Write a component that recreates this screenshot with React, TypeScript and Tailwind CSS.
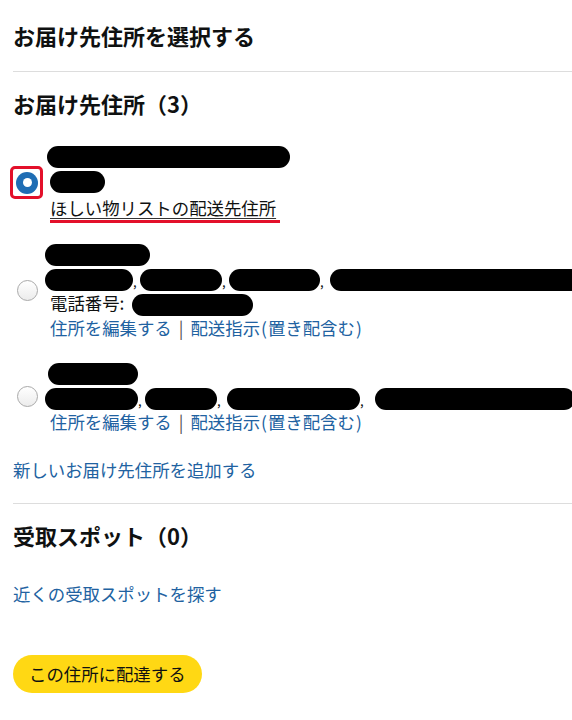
import React from 'react';

const font = { fontFamily: '"Noto Sans CJK JP", "Noto Sans", sans-serif' };

function Bar({ w, ml = 0 }: { w: number; ml?: number }) {
  return (
    <span
      className="inline-block h-[22px] rounded-full bg-black align-middle"
      style={{ width: w, marginLeft: ml }}
    />
  );
}

function Comma() {
  return <span className="inline-block w-[7px] align-bottom text-[13px] leading-[18px] text-[#111]">,</span>;
}

function Radio({ checked }: { checked?: boolean }) {
  if (checked) {
    return (
      <div className="relative ml-[3px] h-[22px] w-[22px]">
        <div className="absolute -left-[6px] -top-[6px] h-[33px] w-[33px] rounded-[5px] border-[3px] border-[#e3102a]" />
        <div className="flex h-[22px] w-[22px] items-center justify-center rounded-full bg-[#1f6db4]">
          <div className="h-[9px] w-[9px] rounded-full bg-white" />
        </div>
      </div>
    );
  }
  return (
    <div className="ml-[4px] h-[21px] w-[21px] rounded-full border border-[#a9a9a9] bg-gradient-to-b from-white to-[#ececec]" />
  );
}

function Links() {
  return (
    <div className="h-[25px] leading-[25px] text-[#2162a1]">
      住所を編集する<span className="mx-[7px] text-[#555]">|</span>配送指示<span className="mx-[1px]">(</span>置き配含む<span className="ml-[1px]">)</span>
    </div>
  );
}

export default function App() {
  return (
    <div className="min-h-[720px] w-[572px] overflow-hidden bg-white text-[17.4px] text-[#0f1111]" style={font}>
      <div className="pl-[13px]">
        <h1 className="pt-[21px] text-[22px] font-bold leading-[28px]">お届け先住所を選択する</h1>
        <div className="mt-[22px] h-px bg-[#dddddd]" />
        <h2 className="mt-[17px] text-[22px] font-bold leading-[28px]">お届け先住所（3）</h2>

        {/* address 1 */}
        <div className="mt-[25px] flex items-center">
          <div className="w-[37px] shrink-0">
            <Radio checked />
          </div>
          <div className="whitespace-nowrap">
            <div className="h-[25px] leading-[25px]"><Bar w={243} ml={-3} /></div>
            <div className="h-[25px] leading-[25px]"><Bar w={55} /></div>
            <div className="mt-[3px] h-[28px] leading-[25px]">
              <span className="inline-block border-b-[3px] border-[#e3102a] pr-[4px] leading-[24px] underline decoration-[#333] underline-offset-[3px]">
                ほしい物リストの配送先住所
              </span>
            </div>
          </div>
        </div>

        {/* address 2 */}
        <div className="mt-[17px] flex items-center">
          <div className="w-[37px] shrink-0">
            <Radio />
          </div>
          <div className="whitespace-nowrap">
            <div className="h-[25px] leading-[25px]"><Bar w={105} ml={-5} /></div>
            <div className="h-[25px] leading-[25px]">
              <Bar w={88} ml={-5} />
              <Comma />
              <Bar w={82} />
              <Comma />
              <Bar w={91} />
              <Comma />
              <Bar w={260} ml={3} />
            </div>
            <div className="h-[25px] leading-[25px]">
              電話番号: <Bar w={121} ml={4} />
            </div>
            <Links />
          </div>
        </div>

        {/* address 3 */}
        <div className="mt-[19px] flex items-center">
          <div className="w-[37px] shrink-0">
            <Radio />
          </div>
          <div className="whitespace-nowrap">
            <div className="h-[25px] leading-[25px]"><Bar w={90} ml={-2} /></div>
            <div className="h-[25px] leading-[25px]">
              <Bar w={93} ml={-5} />
              <Comma />
              <Bar w={72} />
              <Comma />
              <Bar w={133} ml={3} />
              <Comma />
              <Bar w={200} ml={8} />
            </div>
            <Links />
          </div>
        </div>

        <div className="mt-[23px] h-[25px] leading-[25px] text-[#2162a1]">新しいお届け先住所を追加する</div>
        <div className="mt-[21px] h-px bg-[#dddddd]" />
        <h2 className="mt-[17px] text-[22px] font-bold leading-[28px]">受取スポット（0）</h2>
        <div className="mt-[32px] h-[25px] leading-[25px] text-[#2162a1]">近くの受取スポットを探す</div>

        <button className="mt-[49px] h-[38px] rounded-full bg-[#ffd814] px-[16px] text-[17.4px] leading-[38px] text-[#0f1111]">
          この住所に配達する
        </button>
      </div>
    </div>
  );
}
